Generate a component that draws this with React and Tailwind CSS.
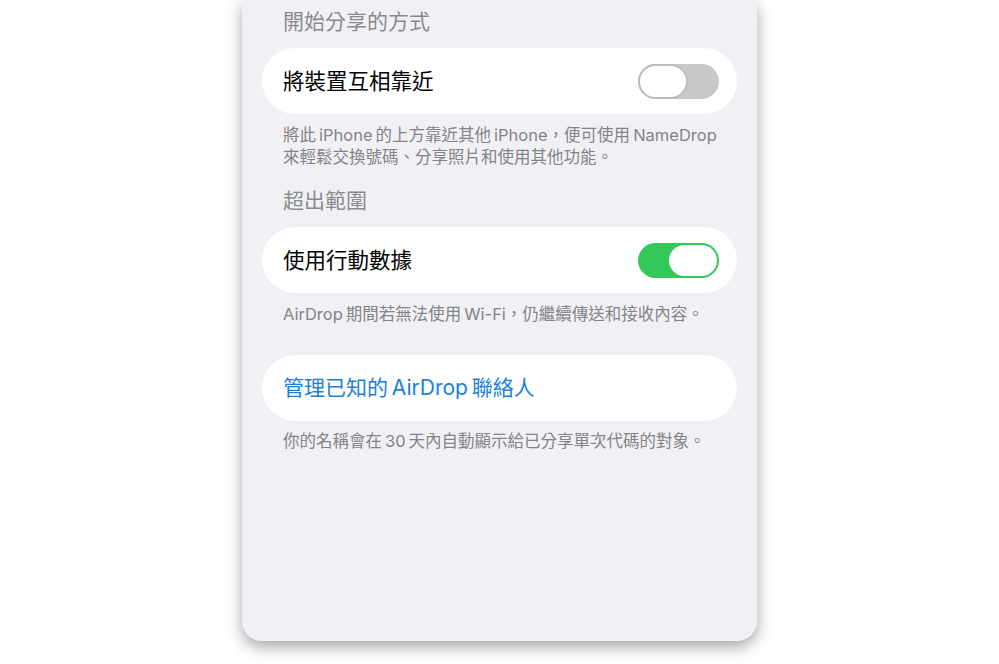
export default function App() {
  const font = { fontFamily: 'Inter, "Noto Sans CJK TC", "Noto Sans", sans-serif' };
  return (
    <div className="w-[999px] h-[664px] bg-white overflow-hidden" style={font}>
      <div className="ml-[242px] w-[515px] h-[641px] bg-[#f1f1f5] rounded-b-[20px] shadow-[0_6px_16px_rgba(0,0,0,0.35)] px-[20px] flex flex-col">
        <div className="mt-[8px] h-[28px] leading-[28px] text-[21px] text-[#8a8a8e] pl-[21px]">開始分享的方式</div>
        <div className="mt-[12px] h-[66px] rounded-full bg-white flex items-center justify-between pl-[21px] pr-[18px]">
          <span className="text-[21.5px] text-black">將裝置互相靠近</span>
          <div className="w-[81px] h-[35px] rounded-full bg-[#c8c8ca] flex items-center">
            <div className="w-[50px] h-[35px] rounded-full bg-white border-[2px] border-[#bdbdbf]"></div>
          </div>
        </div>
        <div className="mt-[10px] pl-[21px] text-[16.5px] leading-[22px] text-[#838388]">
          <div>將此{"\u2009"}iPhone{"\u2009"}的上方靠近其他{"\u2009"}iPhone，便可使用{"\u2009"}NameDrop</div>
          <div>來輕鬆交換號碼、分享照片和使用其他功能。</div>
        </div>
        <div className="mt-[19px] h-[28px] leading-[28px] text-[21px] text-[#8a8a8e] pl-[21px]">超出範圍</div>
        <div className="mt-[12px] h-[66px] rounded-full bg-white flex items-center justify-between pl-[21px] pr-[18px]">
          <span className="text-[21.5px] text-black">使用行動數據</span>
          <div className="w-[81px] h-[35px] rounded-full bg-[#34c759] flex items-center justify-end p-[2px]">
            <div className="w-[48px] h-[31px] rounded-full bg-white"></div>
          </div>
        </div>
        <div className="mt-[10px] pl-[21px] text-[16.5px] leading-[22px] text-[#838388]">AirDrop{"\u2009"}期間若無法使用{"\u2009"}Wi-Fi，仍繼續傳送和接收內容。</div>
        <div className="mt-[30px] h-[66px] rounded-full bg-white flex items-center pl-[21px]">
          <span className="text-[21px] text-[#1a7fdd]">管理已知的{"\u2009"}AirDrop{"\u2009"}聯絡人</span>
        </div>
        <div className="mt-[9px] pl-[21px] text-[16.5px] leading-[22px] text-[#838388]">你的名稱會在{"\u2009"}30{"\u2009"}天內自動顯示給已分享單次代碼的對象。</div>
      </div>
    </div>
  );
}
